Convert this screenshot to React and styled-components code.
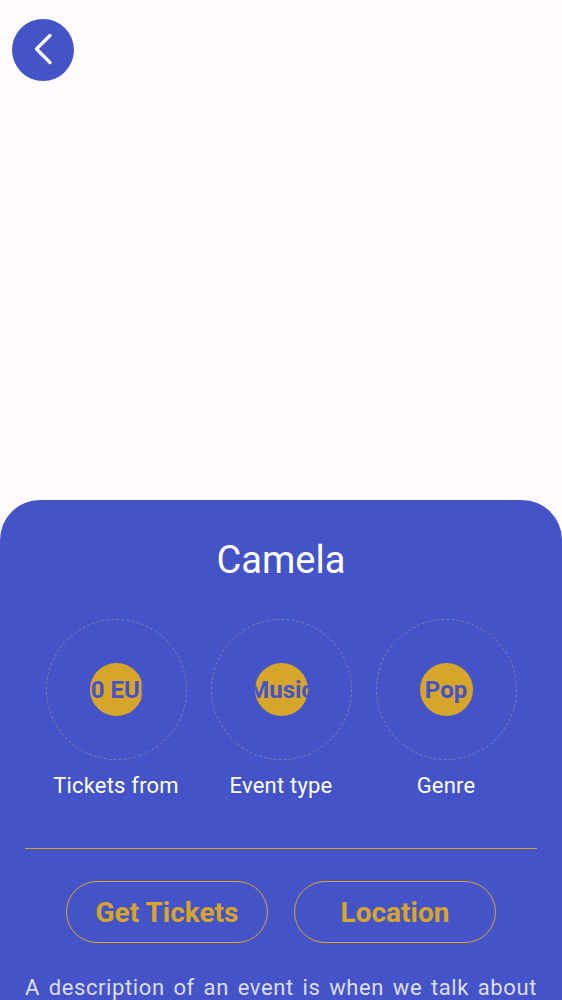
import React from "react";
import styled, { createGlobalStyle } from "styled-components";

const Global = createGlobalStyle`
  html, body { margin: 0; padding: 0; background: #FFFBFE; }
  body { font-family: Roboto, "Noto Sans", sans-serif; }
  * { box-sizing: border-box; }
`;

const Page = styled.div`
  width: 562px;
  height: 1000px;
  background: #FFFBFE;
  display: flex;
  flex-direction: column;
  overflow: hidden;
`;

const Hero = styled.div`
  height: 500px;
  flex-shrink: 0;
  padding: 19px 12px;
`;

const BackButton = styled.button`
  width: 62px;
  height: 62px;
  border-radius: 50%;
  border: none;
  background: #4553C8;
  display: flex;
  align-items: center;
  justify-content: center;
  padding: 0;
  cursor: pointer;
`;

const Panel = styled.div`
  flex: 1;
  background: #4553C8;
  border-radius: 40px 40px 0 0;
  padding: 38px 25px 0;
  display: flex;
  flex-direction: column;
  align-items: center;
`;

const Title = styled.h1`
  margin: 0;
  font-family: Roboto, sans-serif;
  font-weight: 400;
  font-size: 38px;
  line-height: 44px;
  color: #FFFFFF;
`;

const Stats = styled.div`
  display: grid;
  grid-template-columns: repeat(3, 165px);
  justify-content: center;
  margin-top: 37px;
`;

const Stat = styled.div`
  display: flex;
  flex-direction: column;
  align-items: center;
`;

const Ring = styled.div`
  width: 141px;
  height: 141px;
  border-radius: 50%;
  border: 1px dashed rgba(140, 140, 165, 0.7);
  display: flex;
  align-items: center;
  justify-content: center;
`;

const Dot = styled.div`
  width: 53px;
  height: 53px;
  border-radius: 50%;
  background: #D6A62A;
  overflow: hidden;
  display: flex;
  align-items: center;
  justify-content: center;
`;

const DotText = styled.span`
  white-space: nowrap;
  font-family: Roboto, sans-serif;
  font-weight: 700;
  font-size: 24px;
  color: #4553C8;
  flex-shrink: 0;
`;

const Label = styled.div`
  margin-top: 13px;
  font-size: 22px;
  line-height: 26px;
  letter-spacing: 0.2px;
  color: #FFFFFF;
`;

const Divider = styled.hr`
  width: 100%;
  margin: 49px 0 0;
  border: none;
  border-top: 1.5px solid #D6A62A;
`;

const Buttons = styled.div`
  display: flex;
  gap: 26px;
  margin-top: 32px;
`;

const OutlineButton = styled.button`
  width: 202px;
  height: 62px;
  border-radius: 31px;
  border: 1px solid #D6A62A;
  background: transparent;
  color: #D6A62A;
  font-family: Roboto, sans-serif;
  font-weight: 700;
  font-size: 28px;
  padding: 0;
  cursor: pointer;
`;

const Description = styled.p`
  margin: 30px 0 0;
  width: 100%;
  font-size: 22px;
  line-height: 30px;
  letter-spacing: 0.6px;
  text-align: justify;
  color: #DCDDF6;
`;

const stats = [
  { value: "10 EUR", label: "Tickets from" },
  { value: "Music", label: "Event type" },
  { value: "Pop", label: "Genre" },
];

export default function App() {
  return (
    <>
      <Global />
      <Page>
        <Hero>
          <BackButton aria-label="Back">
            <svg width="62" height="62" viewBox="0 0 62 62" fill="none">
              <path d="M38 16.5 L24.5 30 L38 43.5" stroke="#fff" strokeWidth="3.2" strokeLinecap="round" strokeLinejoin="round" />
            </svg>
          </BackButton>
        </Hero>
        <Panel>
          <Title>Camela</Title>
          <Stats>
            {stats.map((s) => (
              <Stat key={s.label}>
                <Ring>
                  <Dot>
                    <DotText>{s.value}</DotText>
                  </Dot>
                </Ring>
                <Label>{s.label}</Label>
              </Stat>
            ))}
          </Stats>
          <Divider />
          <Buttons>
            <OutlineButton>Get Tickets</OutlineButton>
            <OutlineButton>Location</OutlineButton>
          </Buttons>
          <Description>
            A description of an event is when we talk about everything that is going to happen, where it takes place and who is taking part in it.
          </Description>
        </Panel>
      </Page>
    </>
  );
}
